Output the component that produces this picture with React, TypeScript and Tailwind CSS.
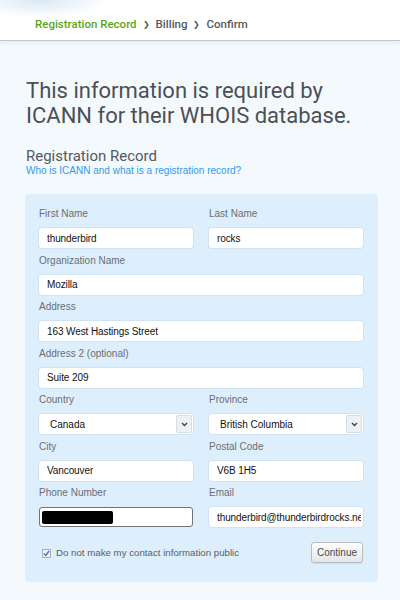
import React from "react";

const formFont = { fontFamily: '"Liberation Sans", Arial, sans-serif' };

function Label({ children }: { children: React.ReactNode }) {
  return (
    <div className="h-[14px] mb-[7px] text-[10px] leading-[14px] text-[#6b6f73]" style={formFont}>
      {children}
    </div>
  );
}

function TextInput({ value }: { value: string }) {
  return (
    <input
      readOnly
      value={value}
      className="block w-full h-[20px] rounded-[3px] bg-white pl-[8px] pr-[2px] text-[10px] tracking-[-0.1px] text-[#111] outline-none shadow-[0_0_0_1px_rgba(200,220,240,0.6)]"
      style={formFont}
    />
  );
}

function Select({ value }: { value: string }) {
  return (
    <div className="flex h-[20px] w-full items-center rounded-[3px] bg-white shadow-[0_0_0_1px_rgba(200,220,240,0.6)]" style={formFont}>
      <span className="flex-1 pl-[11px] text-[10px] text-[#111]">{value}</span>
      <span className="flex h-[18px] w-[16px] items-center justify-center rounded-[2px] border border-[#d5dde5] bg-[#eef1f4] mr-[1px]">
        <svg width="7" height="5" viewBox="0 0 7 5">
          <path d="M1 1l2.5 2.5L6 1" stroke="#444" strokeWidth="1.4" fill="none" />
        </svg>
      </span>
    </div>
  );
}

function Field({ label, children }: { label: string; children: React.ReactNode }) {
  return (
    <div>
      <Label>{label}</Label>
      {children}
    </div>
  );
}

export default function App() {
  return (
    <div className="min-h-[600px] w-[400px] bg-[#f4f9fd]">
      {/* Breadcrumb header */}
      <header
        className="h-[41px] border-b border-[#c4c7ca] bg-white bg-[radial-gradient(ellipse_70px_18px_at_40px_0px,#d9e8f4,transparent)] shadow-[0_2px_4px_rgba(0,0,0,0.06)] flex items-center pl-[35px] pt-[9px] text-[11.5px] font-medium"
        style={{ fontFamily: 'Roboto, "Open Sans", sans-serif' }}
      >
        <span className="text-[#5ba51b]">Registration Record</span>
        <span className="mx-[6px] text-[8px] text-[#555]">&#x276F;</span>
        <span className="text-[#555a5e]">Billing</span>
        <span className="mx-[6px] text-[8px] text-[#555]">&#x276F;</span>
        <span className="text-[#555a5e]">Confirm</span>
      </header>

      <main className="pl-[25px] pr-[22px]">
        <h1
          className="mt-[37px] pl-[1px] text-[22px] leading-[25px] text-[#4b5055]"
          style={{ fontFamily: 'Roboto, "Open Sans", sans-serif' }}
        >
          This information is required by ICANN for their WHOIS database.
        </h1>

        <h2
          className="mt-[19px] pl-[1px] text-[15px] leading-[18px] text-[#555a5e]"
          style={{ fontFamily: 'Roboto, "Open Sans", sans-serif' }}
        >
          Registration Record
        </h2>
        <a className="block pl-[1px] text-[10px] leading-[12px] text-[#3399ee]" style={formFont}>
          Who is ICANN and what is a registration record?
        </a>

        {/* Form panel */}
        <div className="mt-[17px] rounded-[4px] bg-[#ddeefc] pl-[14px] pr-[15px] pt-[13px] pb-[19px]">
          <div className="flex flex-col gap-y-[5.5px]">
            <div className="grid grid-cols-2 gap-x-[16px]">
              <Field label="First Name"><TextInput value="thunderbird" /></Field>
              <Field label="Last Name"><TextInput value="rocks" /></Field>
            </div>
            <Field label="Organization Name"><TextInput value="Mozilla" /></Field>
            <Field label="Address"><TextInput value="163 West Hastings Street" /></Field>
            <Field label="Address 2 (optional)"><TextInput value="Suite 209" /></Field>
            <div className="grid grid-cols-2 gap-x-[16px]">
              <Field label="Country"><Select value="Canada" /></Field>
              <Field label="Province"><Select value="British Columbia" /></Field>
            </div>
            <div className="grid grid-cols-2 gap-x-[16px]">
              <Field label="City"><TextInput value="Vancouver" /></Field>
              <Field label="Postal Code"><TextInput value="V6B 1H5" /></Field>
            </div>
            <div className="grid grid-cols-2 gap-x-[16px]">
              <Field label="Phone Number">
                <div className="flex h-[20px] w-full items-center rounded-[3px] border border-[#6f7377] bg-white pl-[2px]">
                  <span className="h-[13px] w-[71px] rounded-[2px] bg-black blur-[0.6px]" />
                </div>
              </Field>
              <Field label="Email"><TextInput value="thunderbird@thunderbirdrocks.net" /></Field>
            </div>
          </div>

          <div className="mt-[15px] flex items-center justify-between">
            <label className="flex items-center gap-[5px] pl-[3px] pt-[2px] text-[9.7px] text-[#5a5e62]" style={formFont}>
              <span className="flex h-[9px] w-[9px] items-center justify-center border border-[#a9b0b7] bg-[#eef2f6]">
                <svg width="7" height="7" viewBox="0 0 7 7">
                  <path d="M1 3.5l1.8 2L6 1" stroke="#4d6fa8" strokeWidth="1.3" fill="none" />
                </svg>
              </span>
              Do not make my contact information public
            </label>
            <button
              className="h-[21px] w-[52px] rounded-[3px] border border-[#b9bcc0] bg-gradient-to-b from-white to-[#e3e6e9] text-[10px] text-[#3f4a55] shadow-[0_1px_1px_rgba(0,0,0,0.08)]"
              style={formFont}
            >
              Continue
            </button>
          </div>
        </div>
      </main>
    </div>
  );
}
